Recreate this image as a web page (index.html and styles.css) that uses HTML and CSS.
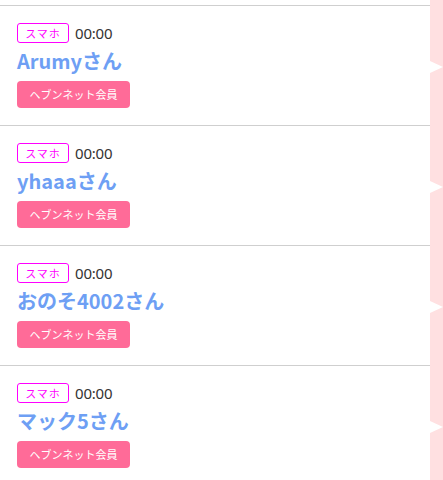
FILE: index.html
```html
<!DOCTYPE html>
<html lang="ja">
<head>
<meta charset="utf-8">
<link rel="stylesheet" href="styles.css">
</head>
<body>
<div class="page">
  <div class="list">
    <div class="item-prev"></div>
    <div class="item">
      <div class="meta"><span class="device">スマホ</span><span class="time">00:00</span></div>
      <div class="name">Arumyさん</div>
      <span class="member">ヘブンネット会員</span>
    </div>
    <div class="item">
      <div class="meta"><span class="device">スマホ</span><span class="time">00:00</span></div>
      <div class="name">yhaaaさん</div>
      <span class="member">ヘブンネット会員</span>
    </div>
    <div class="item">
      <div class="meta"><span class="device">スマホ</span><span class="time">00:00</span></div>
      <div class="name">おのそ4002さん</div>
      <span class="member">ヘブンネット会員</span>
    </div>
    <div class="item">
      <div class="meta"><span class="device">スマホ</span><span class="time">00:00</span></div>
      <div class="name">マック5さん</div>
      <span class="member">ヘブンネット会員</span>
    </div>
  </div>
  <div class="rail">
    <div class="seg"><span class="notch"></span></div>
    <div class="seg"><span class="notch"></span></div>
    <div class="seg"><span class="notch"></span></div>
    <div class="seg"><span class="notch"></span></div>
  </div>
</div>
</body>
</html>
```
FILE: styles.css
```css
html, body {
  margin: 0;
  padding: 0;
  background: #fff;
}
body {
  font-family: "Noto Sans CJK JP", "Noto Sans", sans-serif;
  overflow: hidden;
}
.page {
  display: flex;
  width: 443px;
  height: 480px;
  overflow: hidden;
}
.list {
  flex: 1;
  display: flex;
  flex-direction: column;
}
.item-prev {
  height: 5px;
  border-bottom: 1px solid #cfcfcf;
  flex-shrink: 0;
}
.item {
  flex-shrink: 0;
  height: 120px;
  box-sizing: border-box;
  padding: 17px 17px 0;
  border-bottom: 1px solid #cfcfcf;
  display: flex;
  flex-direction: column;
  align-items: flex-start;
}
.meta {
  display: flex;
  align-items: center;
  gap: 6px;
  height: 20px;
}
.device {
  box-sizing: border-box;
  height: 20px;
  width: 52px;
  border: 1px solid #ff00ff;
  border-radius: 3px;
  color: #ff00ff;
  font-size: 11px;
  line-height: 18px;
  text-align: center;
  letter-spacing: 1px;
}
.time {
  font-family: "Noto Sans", sans-serif;
  font-size: 15px;
  color: #333;
  letter-spacing: -0.2px;
}
.name {
  margin-top: 6px;
  font-size: 20px;
  line-height: 24px;
  font-weight: bold;
  color: #6e9ff4;
}
.member {
  margin-top: 8px;
  box-sizing: border-box;
  width: 113px;
  height: 27px;
  border-radius: 4px;
  background: #ff6b98;
  color: #fff;
  font-size: 11px;
  line-height: 27px;
  text-align: center;
}
.rail {
  width: 13px;
  flex-shrink: 0;
  background: #ffe0e1;
  display: flex;
  flex-direction: column;
}
.seg {
  height: 120px;
  flex-shrink: 0;
  padding-top: 61px;
  box-sizing: border-box;
}
.notch {
  display: block;
  width: 0;
  height: 0;
  border-left: 13px solid #fff;
  border-top: 6px solid transparent;
  border-bottom: 6px solid transparent;
}
```
